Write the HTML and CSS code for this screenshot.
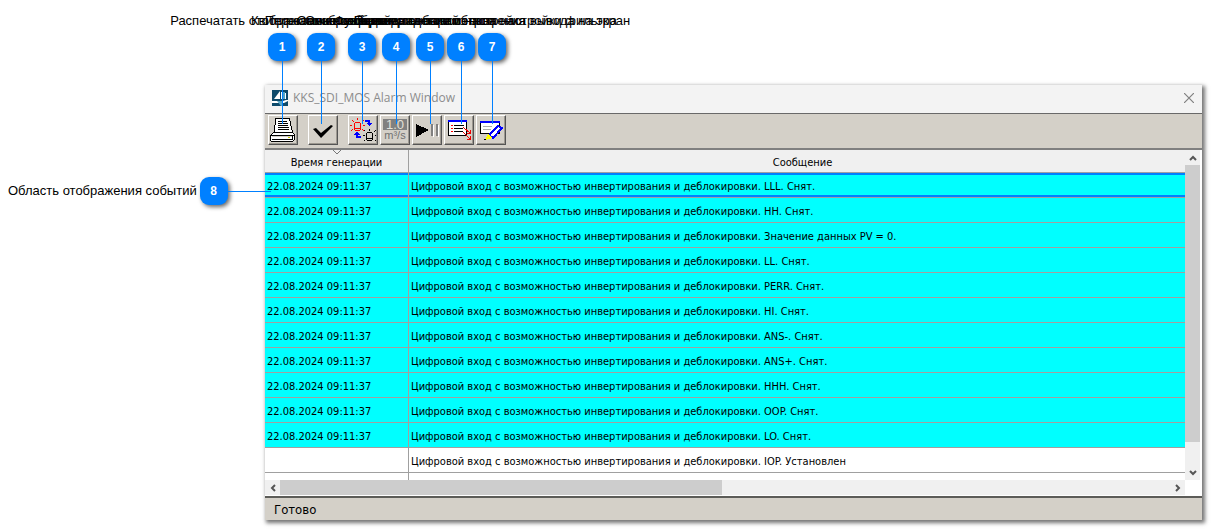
FILE: index.html
```html
<!DOCTYPE html>
<html lang="ru">
<head>
<meta charset="utf-8">
<title>KKS_SDI_MOS Alarm Window</title>
<link rel="stylesheet" href="styles.css">
</head>
<body>
<main class="figure">
  <section class="window">
    <header class="titlebar">
      <svg class="logo" width="16" height="16" viewBox="0 0 16 16" aria-hidden="true">
        <rect width="16" height="16" fill="#0d4a6b"/>
        <path d="M8 1v8H2z" fill="#fff"/><path d="M9 2h4v7H9z" fill="#4fa3c7"/><path d="M9 2h1v7H9zM13 3h1v6h-1z" fill="#fff"/>
        <path d="M0 11h11l3-1h2v1l-4 2H0z" fill="#fff"/><path d="M5 11l4 5h1V11z" fill="#5aa6c4"/>
      </svg>
      <h1 class="title">KKS_SDI_MOS Alarm Window</h1>
      <button class="close" aria-label="Закрыть"><svg width="10" height="10" viewBox="0 0 10 10"><path d="M0 0l10 10M10 0L0 10" stroke="#808080" stroke-width="1.2" fill="none"/></svg></button>
    </header>
    <div class="toolbar">
      <button class="tool tool-apart" aria-label="Печать"><svg width="26" height="26" viewBox="0 0 26 26" shape-rendering="crispEdges">
        <path d="M5.500 1.500h14l3 14h-18z" fill="#fff" stroke="#000"/>
        <path d="M8 4.500h9M8 6.500h10M8 8.500h10M8 10.500h11M8 12.500h11" stroke="#000" fill="none"/>
        <path d="M3.500 15.500h19l2 2v5l-2 2h-21l-1-1v-5z" fill="#fff" stroke="#000"/>
        <path d="M1 18.500h23M2 22.500h20M22.500 18v5" stroke="#000"/><path d="M2 19h20v1H2z" fill="#d4d0c8"/><path d="M18 20h2v1h-2z" fill="#cc0"/>
      </svg></button>
      <button class="tool tool-apart" aria-label="Квитировать"><svg width="26" height="26" viewBox="0 0 26 26"><path d="M3 12l3-1 5 5 10-8 2 1-12 12z" fill="#000"/></svg></button>
      <button class="tool" aria-label="Переключить"><svg width="26" height="26" viewBox="0 0 26 26" shape-rendering="crispEdges">
        <path d="M5 5h5v1H5zM4 6h1v7H4zM10 6h1v7h-1zM5 13h5v1H5zM4 11h7v1H4z" fill="#f00"/>
        <path d="M7 1h1v2H7zM2 3h1v1H2zM3 4h1v1H3zM13 3h1v1h-1zM12 4h1v1h-1zM0 8h2v1H0zM13 8h2v1h-2zM2 12h1v1H2zM12 12h1v1h-1zM1 13h1v1H1zM13 13h1v1h-1z" fill="#f00"/>
        <path d="M17 15h5v1h-5zM16 16h1v7h-1zM22 16h1v7h-1zM17 23h5v1h-5zM16 21h7v1h-7z" fill="#000"/>
        <path d="M19 12h1v2h-1zM14 13h1v1h-1zM25 13h1v1h-1zM24 14h1v1h-1zM13 18h2v1h-2zM25 18h1v1h-1zM14 23h1v1h-1zM25 23h1v1h-1z" fill="#000"/>
        <path d="M15 3h5v3h3l-4 3-3-3h2V5h-3zM11 21H6v-3H3l4-3 3 3H8v1h3z" fill="#00f"/>
      </svg></button>
      <button class="tool" aria-label="Единицы измерения"><svg width="26" height="26" viewBox="0 0 26 26">
        <rect x="1" y="2" width="24" height="11" fill="#808080"/>
        <text x="13" y="12" text-anchor="middle" font-size="13" fill="#e4e0d8">1.0</text>
        <text x="13" y="22" text-anchor="middle" font-size="11" fill="#707070">m³/s</text>
      </svg></button>
      <button class="tool" aria-label="Пауза"><svg width="26" height="26" viewBox="0 0 26 26" shape-rendering="crispEdges"><path d="M2 7l13 6-13 7z" fill="#000"/><path d="M17 7h2v12h-2zM22 7h2v12h-2z" fill="#808080"/><path d="M19 8h1v12h-1zM24 8h1v12h-1z" fill="#fff"/></svg></button>
      <button class="tool" aria-label="Детали"><svg width="26" height="26" viewBox="0 0 26 26" shape-rendering="crispEdges">
        <path d="M2.500 4.500h18v14h-18z" fill="#fff" stroke="#000"/><path d="M2 3h19v2H2z" fill="#00f"/>
        <path d="M5 8.500h2M5 11.500h2M5 14.500h2" stroke="#f00"/><path d="M8 8.500h10M8 11.500h9M8 14.500h9" stroke="#000"/>
        <path d="M17.500 10.500l7 6M24.500 13v3.500H21M17.500 15.500l7 7M24.500 19v3.500H21" stroke="#e00" fill="none"/>
      </svg></button>
      <button class="tool" aria-label="Редактировать"><svg width="26" height="26" viewBox="0 0 26 26" shape-rendering="crispEdges">
        <path d="M2.500 5.500h19v11h-19z" fill="#fff" stroke="#000"/><path d="M2 4h20v2H2z" fill="#00f"/><path d="M5 9.500h9M5 12.500h8" stroke="#aaa"/>
        <path d="M20 9l4 2-9 10-4-3z" fill="#fff" stroke="#00f" stroke-width="2"/><path d="M10 17l4 4-3 1-4 1z" fill="#ff0"/><path d="M6 22h2v1H6z" fill="#000"/>
      </svg></button>
    </div>
    <div class="content">
      <div class="viewport">
        <table class="events">
          <colgroup><col class="col-time"><col></colgroup>
          <thead><tr><th><svg class="sort" width="8" height="4" viewBox="0 0 8 4"><path d="M0 0l4 4 4-4" fill="none" stroke="#777"/></svg>Время генерации</th><th>Сообщение</th></tr></thead>
          <tbody>
            <tr class="active selected"><td>22.08.2024 09:11:37</td><td>Цифровой вход с возможностью инвертирования и деблокировки. LLL. Снят.</td></tr>
            <tr class="active"><td>22.08.2024 09:11:37</td><td>Цифровой вход с возможностью инвертирования и деблокировки. HH. Снят.</td></tr>
            <tr class="active"><td>22.08.2024 09:11:37</td><td>Цифровой вход с возможностью инвертирования и деблокировки. Значение данных PV = 0.</td></tr>
            <tr class="active"><td>22.08.2024 09:11:37</td><td>Цифровой вход с возможностью инвертирования и деблокировки. LL. Снят.</td></tr>
            <tr class="active"><td>22.08.2024 09:11:37</td><td>Цифровой вход с возможностью инвертирования и деблокировки. PERR. Снят.</td></tr>
            <tr class="active"><td>22.08.2024 09:11:37</td><td>Цифровой вход с возможностью инвертирования и деблокировки. HI. Снят.</td></tr>
            <tr class="active"><td>22.08.2024 09:11:37</td><td>Цифровой вход с возможностью инвертирования и деблокировки. ANS-. Снят.</td></tr>
            <tr class="active"><td>22.08.2024 09:11:37</td><td>Цифровой вход с возможностью инвертирования и деблокировки. ANS+. Снят.</td></tr>
            <tr class="active"><td>22.08.2024 09:11:37</td><td>Цифровой вход с возможностью инвертирования и деблокировки. HHH. Снят.</td></tr>
            <tr class="active"><td>22.08.2024 09:11:37</td><td>Цифровой вход с возможностью инвертирования и деблокировки. OOP. Снят.</td></tr>
            <tr class="active"><td>22.08.2024 09:11:37</td><td>Цифровой вход с возможностью инвертирования и деблокировки. LO. Снят.</td></tr>
            <tr><td></td><td>Цифровой вход с возможностью инвертирования и деблокировки. IOP. Установлен</td></tr>
            <tr class="rest"><td></td><td></td></tr>
          </tbody>
        </table>
      </div>
      <div class="scroll scroll-v">
        <button class="arrow" aria-label="Вверх"><svg width="8" height="6" viewBox="0 0 8 6"><path d="M1 5l3-3 3 3" fill="none" stroke="#555" stroke-width="2"/></svg></button>
        <div class="thumb"></div>
        <button class="arrow arrow-end" aria-label="Вниз"><svg width="8" height="6" viewBox="0 0 8 6"><path d="M1 1l3 3 3-3" fill="none" stroke="#555" stroke-width="2"/></svg></button>
      </div>
      <div class="scroll scroll-h">
        <button class="arrow" aria-label="Влево"><svg width="6" height="8" viewBox="0 0 6 8"><path d="M5 1L2 4l3 3" fill="none" stroke="#555" stroke-width="2"/></svg></button>
        <div class="thumb"></div>
        <button class="arrow arrow-end" aria-label="Вправо"><svg width="6" height="8" viewBox="0 0 6 8"><path d="M1 1l3 3-3 3" fill="none" stroke="#555" stroke-width="2"/></svg></button>
      </div>
    </div>
    <footer class="status">Готово</footer>
  </section>

  <div class="callout c1"><span class="label">Распечатать отображаемые события</span><b class="badge">1</b></div>
  <div class="callout c2"><span class="label">Квитирование событий</span><b class="badge">2</b></div>
  <div class="callout c3"><span class="label">Переключение режима событий</span><b class="badge">3</b></div>
  <div class="callout c4"><span class="label">Смена отображения параметров</span><b class="badge">4</b></div>
  <div class="callout c5"><span class="label">Функция остановки обновления</span><b class="badge">5</b></div>
  <div class="callout c6"><span class="label">Отображение диалогового окна настройки фильтра</span><b class="badge">6</b></div>
  <div class="callout c7"><span class="label">Подтверждение и настройка вывода на экран</span><b class="badge">7</b></div>
  <div class="callout c8"><span class="label">Область отображения событий</span><b class="badge">8</b></div>
</main>
</body>
</html>
```
FILE: styles.css
```css
* { box-sizing: border-box; }
body { margin: 0; background: #fff; color: #000; font-family: "Liberation Sans", Arial, sans-serif; }
button { padding: 0; border: 0; background: none; font: inherit; }
svg { display: block; }

.figure { position: relative; padding: 85px 9px 9px 265px; }

.window { background: #f0f0f0; box-shadow: 2px 2px 4px 1px rgba(0, 0, 0, .55); font-family: "DejaVu Sans Condensed", Tahoma, sans-serif; }
.titlebar { display: flex; align-items: center; gap: 5px; height: 28px; padding: 0 8px 3px 7px; background: #f3f3f3; }
.title { flex: 1; margin: 0; font: 12px "Open Sans", sans-serif; color: #8c8c8c; }

.toolbar { display: flex; gap: 2px; padding: 1px 3px 3px; background: #d4d0c8; border-top: 1px solid #696969; border-bottom: 2px solid #808080; }
.tool { width: 30px; height: 30px; padding: 1px; border: 1px solid; border-color: #fff #555 #555 #fff; box-shadow: inset -1px -1px #9c9890; font-family: "Liberation Sans", sans-serif; }
.tool-apart { margin-right: 8px; }

.content { display: grid; grid-template-columns: minmax(0, 1fr) 15px; grid-template-rows: 330px 15px; padding: 0 2px 1px 0; background: #fff; border-bottom: 2px solid #5c5c58; }
.viewport { overflow: hidden; }
.events { width: calc(100% + 12px); table-layout: fixed; border-collapse: separate; border-spacing: 0; font-size: 11px; }
.col-time { width: 144px; }
.events th { position: relative; height: 23px; padding: 2px 0 0; font-weight: normal; background: #f0f0f0; border: solid #a0a0a0; border-width: 0 1px 1px 0; }
.sort { position: absolute; top: 0; left: 68px; }
.events td { height: 25px; padding: 2px 2px 0; white-space: nowrap; border: solid #a0a0a0; border-width: 0 1px 1px 0; }
.active { background: #0ff; }
.selected td { box-shadow: inset 0 2px #0080ff, inset 0 -2px #0080ff; }
.events .rest td { height: 8px; border-bottom: 0; }

.scroll { display: flex; background: #f0f0f0; }
.scroll-v { flex-direction: column; }
.arrow { display: grid; place-items: center; flex: 0 0 15px; min-height: 15px; }
.arrow-end { margin-top: auto; }
.scroll-h .arrow-end { margin: 0 0 0 auto; }
.thumb { background: #cdcdcd; }
.scroll-v .thumb { height: 84%; }
.scroll-h .thumb { width: 48%; }
.status { padding: 2px 9px 0; font-size: 13px; line-height: 20px; background: #d4d0c8; }

.callout { position: absolute; top: 13px; display: flex; flex-direction: column; align-items: center; width: 320px; margin-left: -160px; font-size: 13px; line-height: 16px; }
.label { white-space: nowrap; }
.badge { width: 28px; height: 28px; margin-top: 4px; border-radius: 9px; background: #0080ff; color: #fff; box-shadow: 2px 2px 4px rgba(0, 0, 0, .6); font-size: 12px; line-height: 28px; text-align: center; }
.callout::after { content: ""; width: 1px; height: 63px; background: #0080ff; }
.c1 { left: 282px; }
.c2 { left: 321px; }
.c3 { left: 362px; }
.c4 { left: 396px; }
.c5 { left: 430px; }
.c6 { left: 461px; }
.c7 { left: 492px; }
.c8 { top: 177px; left: 8px; flex-direction: row; gap: 3px; width: auto; margin: 0; }
.c8 .badge { margin: 0; }
.c8::after { width: 43px; height: 1px; margin-left: -3px; }
```
